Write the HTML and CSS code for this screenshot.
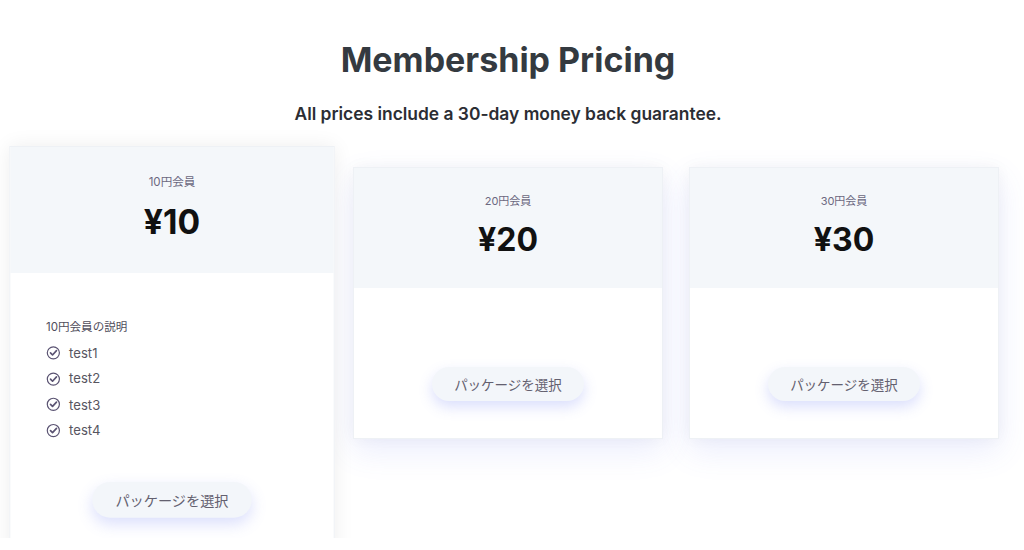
FILE: index.html
```html
<!DOCTYPE html>
<html lang="ja">
<head>
<meta charset="utf-8">
<title>Membership Pricing</title>
<link rel="stylesheet" href="styles.css">
</head>
<body>
<main class="pricing">
  <h1 class="title">Membership Pricing</h1>
  <p class="subtitle">All prices include a 30-day money back guarantee.</p>
  <div class="plans">
    <div class="plan featured">
      <div class="plan-head">
        <div class="plan-name">10円会員</div>
        <div class="plan-price">¥10</div>
      </div>
      <div class="plan-body">
        <div class="features">
          <p class="desc">10円会員の説明</p>
          <ul class="list">
            <li><svg class="check" viewBox="0 0 16 16"><circle cx="8" cy="8" r="6.6"/><path d="M4.9 8.1 L7.1 10.3 L11.4 5.6"/></svg>test1</li>
            <li><svg class="check" viewBox="0 0 16 16"><circle cx="8" cy="8" r="6.6"/><path d="M4.9 8.1 L7.1 10.3 L11.4 5.6"/></svg>test2</li>
            <li><svg class="check" viewBox="0 0 16 16"><circle cx="8" cy="8" r="6.6"/><path d="M4.9 8.1 L7.1 10.3 L11.4 5.6"/></svg>test3</li>
            <li><svg class="check" viewBox="0 0 16 16"><circle cx="8" cy="8" r="6.6"/><path d="M4.9 8.1 L7.1 10.3 L11.4 5.6"/></svg>test4</li>
          </ul>
        </div>
        <button class="select">パッケージを選択</button>
      </div>
    </div>
    <div class="plan">
      <div class="plan-head">
        <div class="plan-name">20円会員</div>
        <div class="plan-price">¥20</div>
      </div>
      <div class="plan-body">
        <div class="features"></div>
        <button class="select">パッケージを選択</button>
      </div>
    </div>
    <div class="plan">
      <div class="plan-head">
        <div class="plan-name">30円会員</div>
        <div class="plan-price">¥30</div>
      </div>
      <div class="plan-body">
        <div class="features"></div>
        <button class="select">パッケージを選択</button>
      </div>
    </div>
  </div>
</main>
</body>
</html>
```

FILE: styles.css
```css
html, body {
  margin: 0;
  padding: 0;
  background: #ffffff;
  overflow: hidden;
}

body {
  font-family: Inter, "Noto Sans CJK JP", sans-serif;
  color: #333;
}

.pricing {
  width: 1016px;
  padding-top: 38px;
  text-align: center;
}

.title {
  margin: 0;
  font-size: 34px;
  line-height: 44px;
  font-weight: 700;
  color: #343a40;
}

.subtitle {
  margin: 20px 0 0;
  font-size: 17.4px;
  line-height: 24px;
  font-weight: 600;
  color: #2b2d33;
}

.plans {
  margin-top: 41px;
  display: grid;
  grid-template-columns: repeat(3, 310px);
  column-gap: 26px;
  justify-content: center;
  align-items: start;
}

.plan {
  background: #fff;
  border: 1px solid #eef1f5;
  box-shadow: 0 12px 30px rgba(90, 110, 240, 0.12), 0 0 14px rgba(0, 0, 0, 0.04);
}

.plan.featured {
  transform: scale(1.05);
  transform-origin: top center;
  margin-top: -21px;
  box-shadow: 0 0 18px rgba(0, 0, 0, 0.07);
}

.plan-head {
  background: #f4f7fa;
  height: 120px;
  box-sizing: border-box;
  padding-top: 25px;
}

.plan-name {
  font-size: 11px;
  line-height: 16px;
  color: #6b6880;
}

.plan-price {
  margin-top: 11px;
  font-size: 32px;
  line-height: 40px;
  font-weight: 700;
  color: #111;
}

.plan-body {
  display: flex;
  flex-direction: column;
  align-items: center;
  padding: 42px 34px 37px;
}

.features {
  align-self: stretch;
  text-align: left;
}

.desc {
  margin: 0 0 4px;
  font-size: 11px;
  line-height: 18px;
  color: #4f4d5c;
}

.list {
  list-style: none;
  margin: 0;
  padding: 0;
}

.list li {
  display: flex;
  align-items: center;
  height: 24.5px;
  font-size: 12.5px;
  color: #57555f;
}

.check {
  width: 14px;
  height: 14px;
  margin-right: 8px;
  fill: none;
  stroke: #5a5372;
  stroke-width: 1.3;
  stroke-linecap: round;
  stroke-linejoin: round;
}

.check path {
  stroke-width: 1.8;
}

.select {
  margin-top: 37px;
  width: 152px;
  height: 34px;
  border: none;
  border-radius: 17px;
  background: #f3f6fa;
  font-family: Inter, "Noto Sans CJK JP", sans-serif;
  font-size: 13.5px;
  color: #63606f;
  box-shadow: 0 6px 14px rgba(90, 110, 240, 0.22);
  cursor: pointer;
}
```
